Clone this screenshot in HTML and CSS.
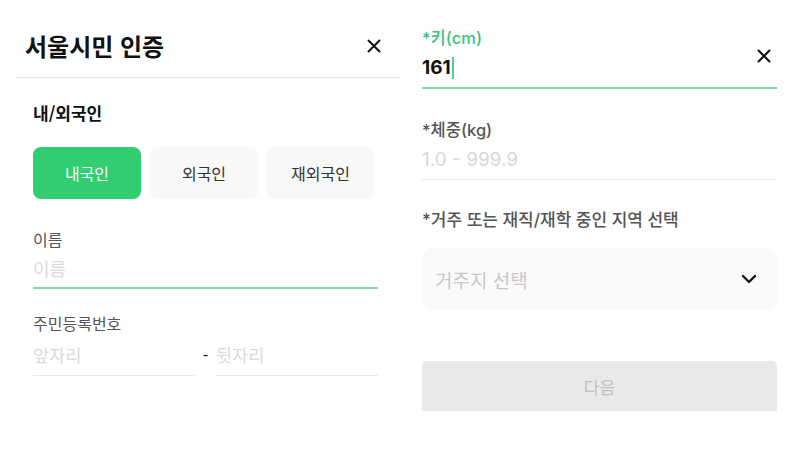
FILE: index.html
```html
<!DOCTYPE html>
<html lang="ko">
<head>
<meta charset="utf-8">
<title>서울시민 인증</title>
<link rel="stylesheet" href="styles.css">
</head>
<body>
<div class="page">
  <section class="panel left">
    <header class="header">
      <h1 class="title">서울시민 인증</h1>
      <svg class="close" width="14" height="14" viewBox="0 0 14 14"><path d="M1.5 1.5 L12.5 12.5 M12.5 1.5 L1.5 12.5" stroke="#111" stroke-width="2" stroke-linecap="round"/></svg>
    </header>
    <div class="content">
      <div class="section-label">내/외국인</div>
      <div class="segments">
        <div class="seg active">내국인</div>
        <div class="seg">외국인</div>
        <div class="seg">재외국인</div>
      </div>
      <div class="field-label name-label">이름</div>
      <div class="input focused">이름</div>
      <div class="field-label rrn-label">주민등록번호</div>
      <div class="rrn">
        <div class="input plain half">앞자리</div>
        <div class="dash">-</div>
        <div class="input plain half">뒷자리</div>
      </div>
    </div>
  </section>
  <section class="panel right">
    <div class="rfield first">
      <div class="rlabel green">*키(cm)</div>
      <div class="rinput active"><span class="value">161</span><span class="caret"></span></div>
      <svg class="clear" width="14" height="14" viewBox="0 0 14 14"><path d="M1.5 1.5 L12.5 12.5 M12.5 1.5 L1.5 12.5" stroke="#111" stroke-width="2" stroke-linecap="round"/></svg>
    </div>
    <div class="rfield second">
      <div class="rlabel">*체중(kg)</div>
      <div class="rinput placeholder">1.0 - 999.9</div>
    </div>
    <div class="rlabel region-label">*거주 또는 재직/재학 중인 지역 선택</div>
    <div class="select">
      <span class="select-text">거주지 선택</span>
      <svg class="chevron" width="16" height="10" viewBox="0 0 16 10"><path d="M2 2 L8 8 L14 2" fill="none" stroke="#111" stroke-width="2.4" stroke-linecap="round" stroke-linejoin="round"/></svg>
    </div>
    <div class="next">다음</div>
  </section>
</div>
</body>
</html>
```
FILE: styles.css
```css
* { box-sizing: border-box; }
html, body { margin: 0; padding: 0; background: #fff; }
body {
  font-family: "Noto Sans CJK KR", "Noto Sans", sans-serif;
  color: #111;
  width: 794px;
  height: 469px;
  overflow: hidden;
}
.page { display: flex; height: 469px; }
.panel.left { width: 385px; margin-left: 15px; }
.header {
  height: 78px;
  padding: 15px 19px 0 10px;
  display: flex;
  align-items: center;
  justify-content: space-between;
  border-bottom: 1px solid #e2e2e2;
}
.title { margin: 0; font-size: 24px; font-weight: 700; line-height: 30px; letter-spacing: 0; }
.close { display: block; }
.content { padding: 0 22px 0 18px; display: flex; flex-direction: column; }
.section-label { margin-top: 23px; font-size: 17px; font-weight: 700; line-height: 24px; }
.segments { margin-top: 22px; display: flex; gap: 9px; }
.seg {
  width: 108px; height: 52px;
  border-radius: 8px;
  background: #f8f8f8;
  display: flex; align-items: center; justify-content: center;
  font-size: 16px; color: #333;
}
.seg:last-child { width: 107px; }
.seg.active { background: #33cd71; color: #fff; }
.field-label { font-size: 16px; line-height: 22px; color: #555; }
.name-label { margin-top: 29px; }
.rrn-label { margin-top: 23px; }
.input {
  margin-top: 5px;
  font-size: 18px; line-height: 26px;
  color: #dadada;
  padding-bottom: 6px;
  border-bottom: 2px solid #86dbaa;
}
.input.plain { border-bottom: 1px solid #e9e9e9; padding-bottom: 7px; margin-top: 0; font-size: 17.5px; }
.rrn { display: flex; align-items: flex-start; margin-top: 8px; }
.half { width: 162px; }
.dash { width: 21px; text-align: center; font-size: 16px; line-height: 26px; color: #111; }

.panel.right {
  width: 394px; padding: 27px 17px 0 22px;
  display: flex; flex-direction: column;
  font-family: Inter, "Noto Sans CJK KR", sans-serif;
}
.rfield { position: relative; }
.rlabel { font-size: 16.5px; line-height: 22px; color: #555; font-weight: 500; }
.rlabel.green { color: #3dc27a; }
.rinput {
  margin-top: 6px;
  height: 33px;
  font-size: 19px; line-height: 26px;
  border-bottom: 1px solid #e8e8e8;
  display: flex; align-items: flex-start;
}
.rinput.active { height: 34px; border-bottom: 2px solid #86dbaa; font-weight: 700; color: #111; }
.caret { display: inline-block; width: 2px; height: 22px; margin-top: 2px; margin-left: 1px; background: #5bc98c; }
.rinput.placeholder { color: #d8d8d8; }
.clear { position: absolute; right: 6px; top: 22px; }
.rfield.second { margin-top: 30px; }
.region-label { margin-top: 29px; font-size: 17px; }
.select {
  margin-top: 17px;
  height: 62px;
  border-radius: 10px;
  background: #fafafa;
  padding: 0 20px 0 13px;
  display: flex; align-items: center; justify-content: space-between;
}
.select-text { font-size: 19px; color: #c8c8c8; }
.chevron { display: block; }
.next {
  margin-top: 51px;
  height: 50px;
  background: #e9e9e9;
  border-radius: 5px 5px 0 0;
  display: flex; align-items: center; justify-content: center;
  font-size: 17px; color: #c2c2c2;
}
```
